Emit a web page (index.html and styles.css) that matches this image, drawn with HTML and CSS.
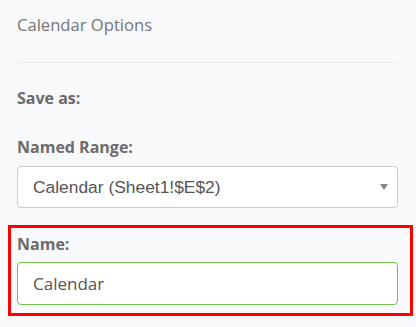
FILE: index.html
```html
<!DOCTYPE html>
<html lang="en">
<head>
    <meta charset="UTF-8">
    <meta name="viewport" content="width=device-width, initial-scale=1.0">
    <title>Calendar Options</title>
    <link rel="stylesheet" href="styles.css">
</head>
<body>
    <div class="panel">
        <div class="panel-title">Calendar Options</div>
        <div class="divider"></div>

        <div class="section-label">Save as:</div>

        <!-- Named range picker -->
        <div class="field-label range-label">Named Range:</div>
        <div class="select-box">
            <span class="select-text">Calendar (Sheet1!$E$2)</span>
            <span class="select-arrow"></span>
        </div>

        <!-- Highlighted name field -->
        <div class="field-group highlight">
            <div class="field-label">Name:</div>
            <div class="text-input">Calendar</div>
        </div>
    </div>
</body>
</html>
```

FILE: styles.css
```css
body {
    margin: 0;
    padding: 0;
    background-color: #f8f9fa;
    font-family: "Open Sans", Arial, sans-serif;
}
.panel {
    padding: 13px 18px 0 17px;
}
.panel-title {
    font-size: 16.6px;
    line-height: 24px;
    color: #757575;
}
.divider {
    height: 1px;
    background-color: #e9ebee;
    margin-top: 25px;
}
.section-label,
.field-label {
    font-size: 16px;
    font-weight: bold;
    line-height: 22px;
    color: #6b6b6b;
}
.section-label {
    margin-top: 24px;
}
.range-label {
    margin-top: 27px;
}
.select-box {
    margin-top: 8px;
    height: 40px;
    border: 1px solid #cccccc;
    border-radius: 4px;
    background-color: #fff;
    display: flex;
    align-items: center;
    justify-content: space-between;
    padding: 0 9px 0 15px;
}
.select-text {
    font-family: "Liberation Sans", Arial, sans-serif;
    font-size: 17.4px;
    color: #555;
}
.select-arrow {
    width: 0;
    height: 0;
    border-left: 4px solid transparent;
    border-right: 4px solid transparent;
    border-top: 6px solid #888;
}
.field-group {
    margin-top: 17px;
}
.highlight {
    border: 3px solid #ff0000;
    margin-left: -9px;
    margin-right: -15px;
    padding: 5px 12px 8px 6px;
}
.text-input {
    margin-top: 7px;
    height: 41px;
    border: 1px solid #72c24f;
    border-radius: 4px;
    background-color: #fff;
    padding-left: 15px;
    display: flex;
    align-items: center;
    font-size: 17px;
    color: #555;
}
```
